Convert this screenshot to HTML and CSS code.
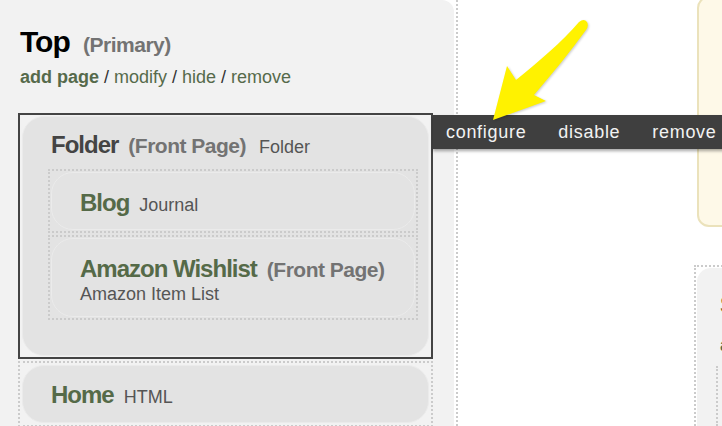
FILE: index.html
```html
<!DOCTYPE html>
<html lang="en">
<head>
    <meta charset="UTF-8">
    <meta name="viewport" content="width=device-width, initial-scale=1.0">
    <title>Navigation</title>
    <link rel="stylesheet" href="styles.css">
</head>
<body>
    <div class="layout">
        <div class="sidebar">
            <h1 class="nav-title">Top <span class="paren">(Primary)</span></h1>
            <div class="nav-links">
                <a class="strong">add page</a> / <a>modify</a> / <a>hide</a> / <a>remove</a>
            </div>

            <ul class="pages">
                <li class="page-item selected">
                    <div class="page-box">
                        <div class="page-line">
                            <span class="page-name">Folder</span>
                            <span class="paren">(Front Page)</span>
                            <span class="page-type">Folder</span>
                        </div>
                        <ul class="pages sub">
                            <li class="page-item">
                                <div class="page-box">
                                    <div class="page-line">
                                        <span class="page-name">Blog</span>
                                        <span class="page-type">Journal</span>
                                    </div>
                                </div>
                            </li>
                            <li class="page-item">
                                <div class="page-box">
                                    <div class="page-line">
                                        <span class="page-name">Amazon Wishlist</span>
                                        <span class="paren">(Front Page)</span>
                                    </div>
                                    <div class="page-type block">Amazon Item List</div>
                                </div>
                            </li>
                        </ul>
                    </div>
                    <!-- hover menu for the selected page -->
                    <div class="toolbar">
                        <a>configure</a>
                        <a>disable</a>
                        <a>remove</a>
                    </div>
                </li>
                <li class="page-item">
                    <div class="page-box">
                        <div class="page-line">
                            <span class="page-name">Home</span>
                            <span class="page-type">HTML</span>
                        </div>
                    </div>
                </li>
                <li class="page-item"></li>
            </ul>
        </div>

        <div class="content">
            <div class="aside">
                <div class="notice"></div>
                <div class="side-box">
                    <div class="side-inner">
                        <div class="side-title">Secondary</div>
                        <div class="side-links">add page</div>
                        <ul class="side-list"><li></li></ul>
                    </div>
                </div>
            </div>
        </div>

        <svg class="arrow" width="722" height="426" viewBox="0 0 722 426">
            <path d="M493 120 L507 66 L516 80 C538 62 562 42 579 22 Q584 18 587 22 Q589 26 586 30 C570 52 552 74 534 95 L546 101 Z" fill="#fff200"/>
        </svg>
    </div>
</body>
</html>
```

FILE: styles.css
```css
body {
    margin: 0;
    width: 722px;
    height: 426px;
    overflow: hidden;
    background: #fff;
    font-family: "Liberation Sans", Arial, sans-serif;
}
.layout {
    position: relative;
    display: flex;
    height: 426px;
}
.sidebar {
    width: 454px;
    flex-shrink: 0;
    box-sizing: border-box;
    padding: 25px 0 0 18px;
    background: #f2f2f2;
    border-top-right-radius: 12px;
}
.nav-title {
    margin: 0 0 0 2px;
    font-size: 30px;
    line-height: 34px;
    letter-spacing: -1px;
    color: #000;
}
.nav-title .paren {
    margin-left: 6px;
}
.paren {
    font-size: 21px;
    font-weight: bold;
    letter-spacing: -0.5px;
    color: #737373;
}
.nav-links {
    margin: 5px 0 0 2px;
    font-size: 18px;
    line-height: 20px;
    color: #333;
}
.nav-links a {
    color: #566a4b;
}
.nav-links a.strong {
    font-weight: bold;
}
.pages {
    list-style: none;
    margin: 26px 0 0;
    padding: 0;
    width: 415px;
}
.page-item {
    position: relative;
    border: 2px dotted #cbcbcb;
    margin-bottom: 2px;
    min-height: 4px;
}
.page-item.selected {
    border: 2px solid #444;
}
.page-box {
    margin: 2px;
    padding: 14px 10px 12px 28px;
    background: #e3e3e3;
    border: 1px solid #ebebeb;
    border-radius: 22px;
}
.selected > .page-box {
    margin: 1px 2px 1px 2px;
    padding-top: 13px;
    padding-bottom: 35px;
}
.page-line {
    display: flex;
    align-items: baseline;
    line-height: 30px;
}
.page-name {
    font-size: 24px;
    font-weight: bold;
    letter-spacing: -1px;
    color: #556a48;
    margin-right: 10px;
}
.selected > .page-box > .page-line .page-name {
    color: #444;
}
.page-line .paren {
    margin-right: 13px;
    line-height: 24px;
}
.page-type {
    font-size: 18px;
    line-height: 20px;
    color: #555;
}
.pages.sub {
    width: auto;
    margin: 9px 0 0 -3px;
}
.sub .page-item {
    margin-bottom: 2px;
}
.sub .page-item:last-child {
    margin-bottom: 0;
}
.sub .page-box {
    margin: 1px;
    padding-top: 15px;
    padding-bottom: 11px;
}
.sub .page-item:last-child .page-box {
    padding-top: 15px;
    padding-bottom: 12px;
}
.toolbar {
    position: absolute;
    top: 0;
    left: calc(100% + 2px);
    width: 300px;
    height: 34px;
    display: flex;
    gap: 32px;
    padding-left: 13px;
    background: #3f3f3f;
    box-shadow: 0 2px 3px rgba(0,0,0,0.35);
    z-index: 2;
}
.toolbar a {
    font-size: 18px;
    line-height: 34px;
    letter-spacing: 0.7px;
    color: #f2f2f2;
}
.content {
    flex: 1;
    margin-left: 2px;
    border-left: 2px dotted #cbcbcb;
    display: flex;
    justify-content: flex-end;
}
.aside {
    width: 28px;
}
.notice {
    width: 240px;
    height: 231px;
    box-sizing: border-box;
    margin: -4px 0 0 3px;
    background: #fef9e8;
    border: 2px solid #ebe2bb;
    border-radius: 12px;
}
.side-box {
    width: 240px;
    margin-top: 38px;
    border: 2px dotted #cbcbcb;
}
.side-inner {
    margin: 1px;
    height: 200px;
    padding: 22px 0 0 23px;
    background: #f2f2f2;
    border-top-left-radius: 14px;
}
.side-title {
    font-size: 24px;
    line-height: 30px;
    font-weight: bold;
    letter-spacing: -1px;
    color: #7b5a2e;
}
.side-links {
    margin-top: 15px;
    font-size: 18px;
    line-height: 20px;
    font-weight: bold;
    color: #566a4b;
}
.side-list {
    list-style: none;
    margin: 11px 0 0 -4px;
    padding: 0;
    border-left: 2px dotted #cbcbcb;
    height: 60px;
}
.arrow {
    position: absolute;
    top: 0;
    left: 0;
    pointer-events: none;
    z-index: 3;
    filter: drop-shadow(1px 1px 1px rgba(0,0,0,0.2));
}
```
